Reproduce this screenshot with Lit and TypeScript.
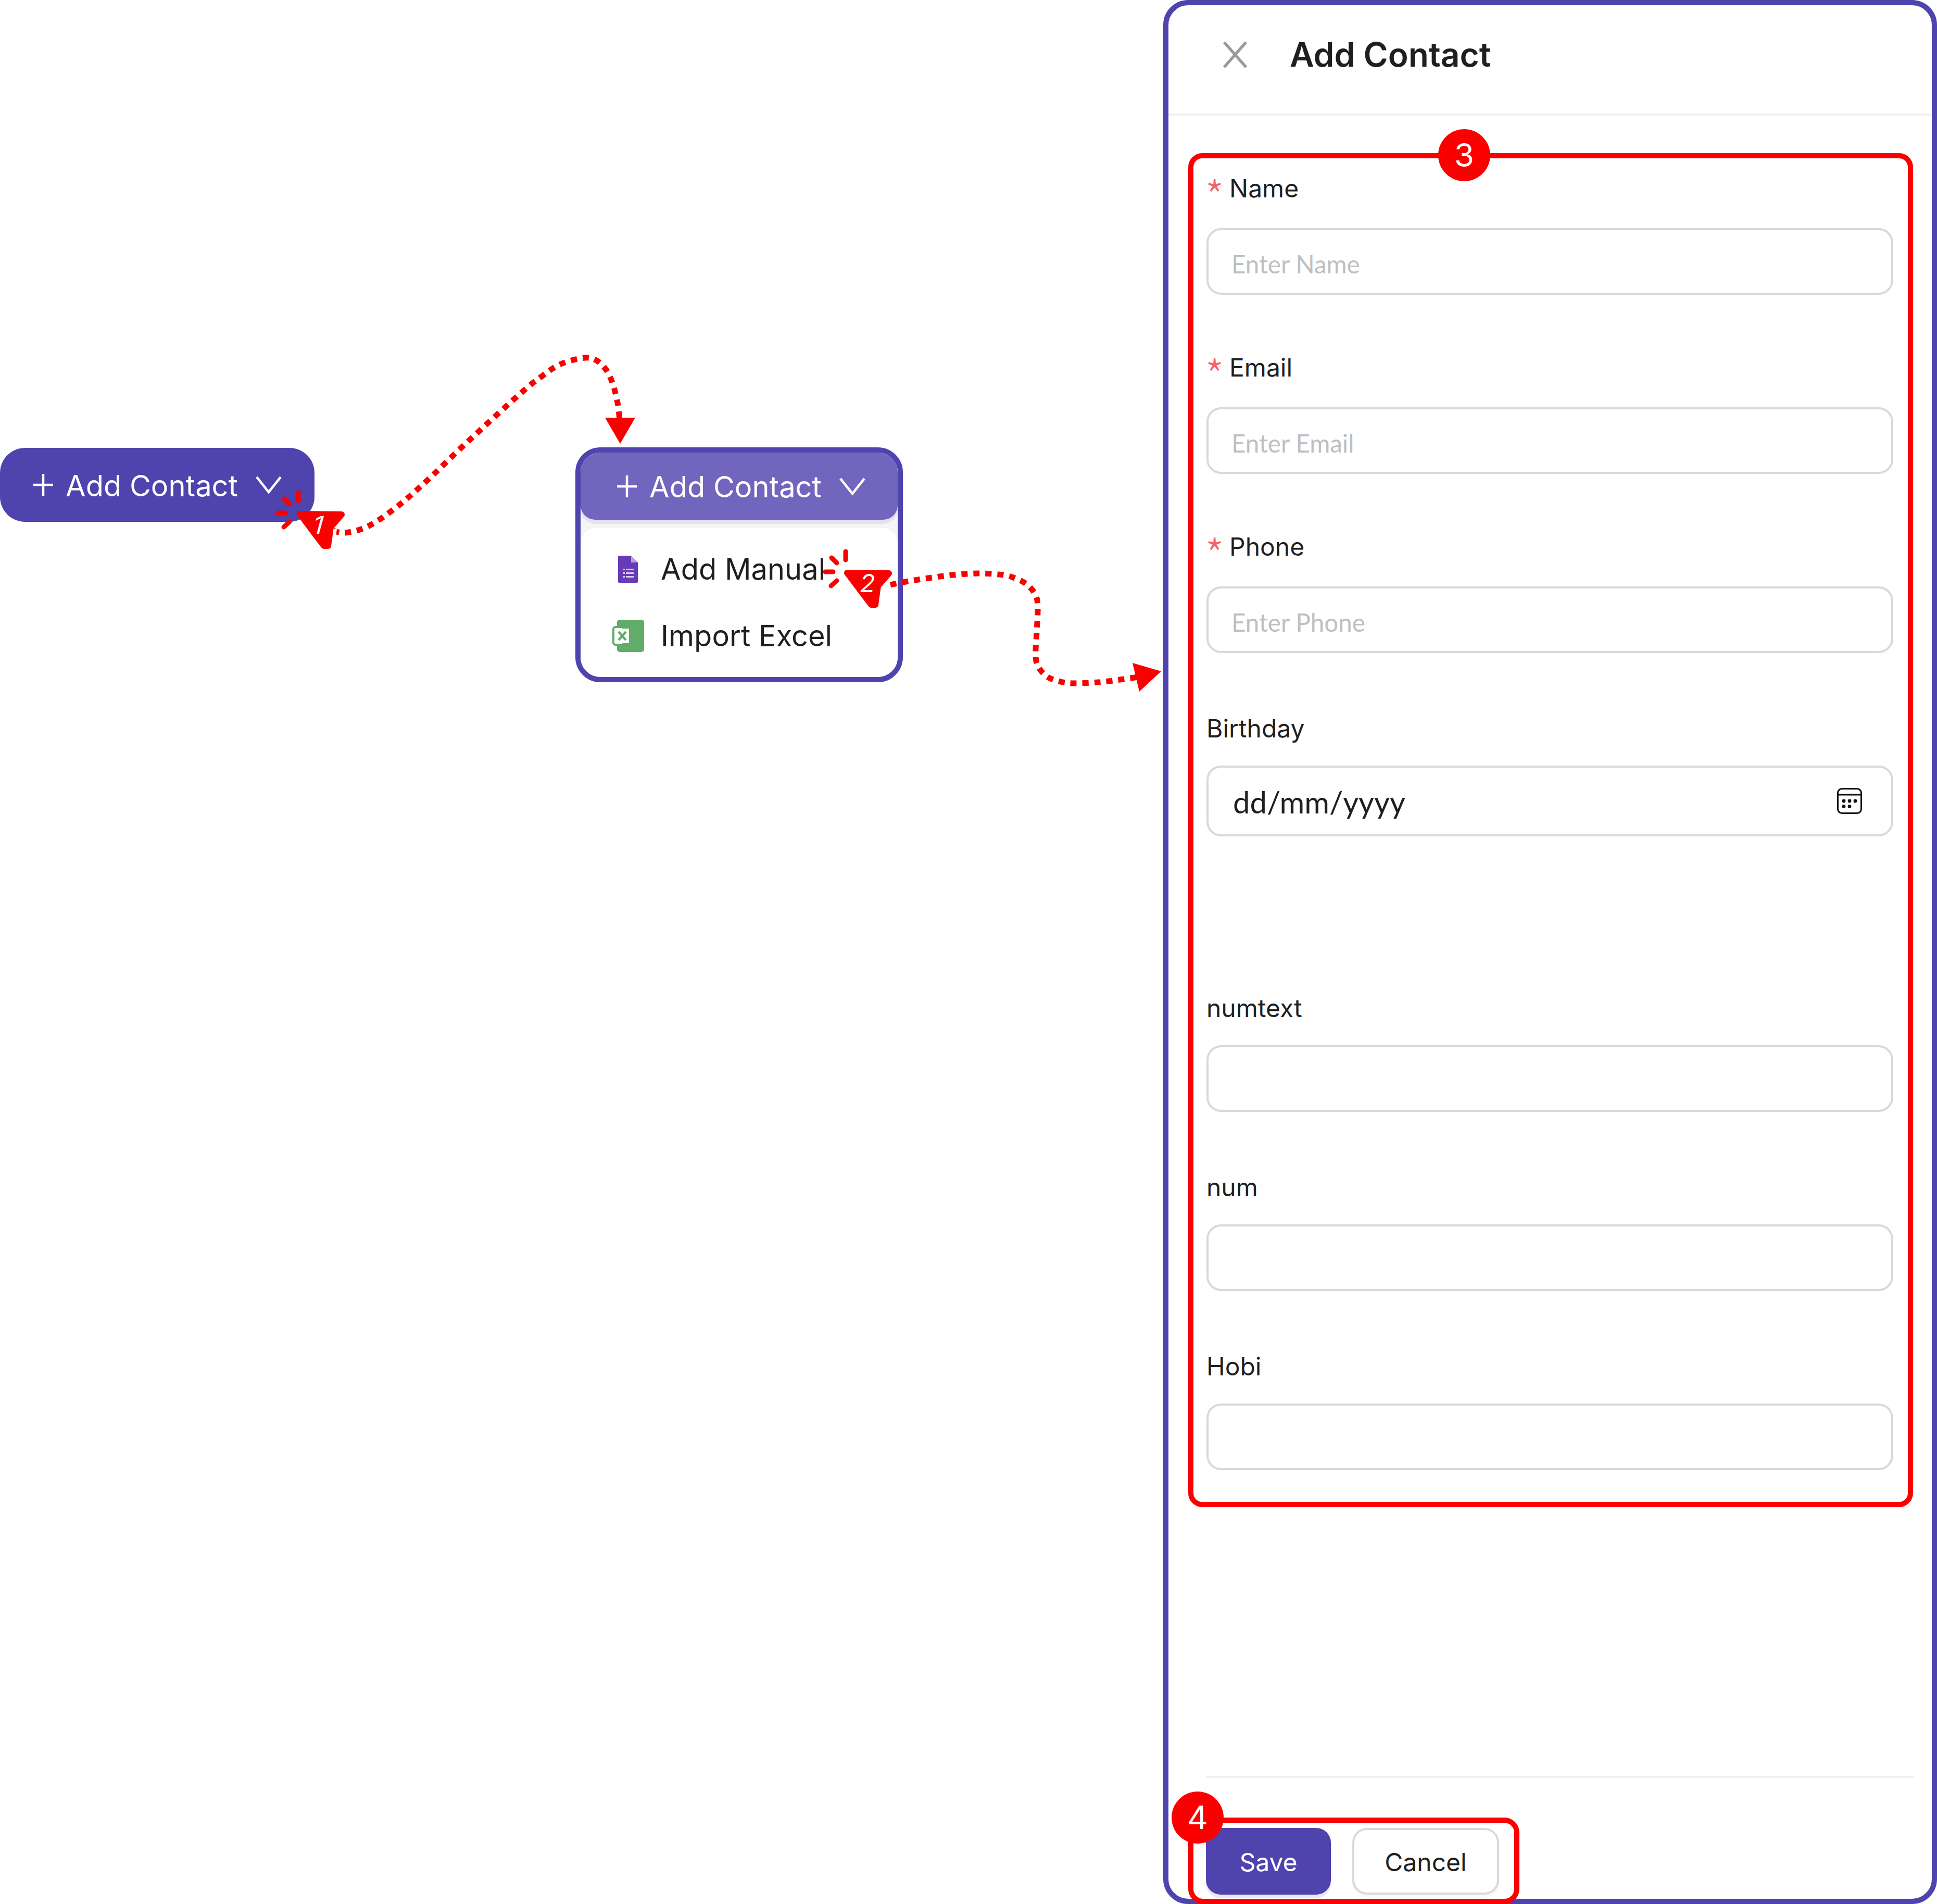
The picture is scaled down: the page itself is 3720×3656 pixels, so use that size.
import { LitElement, html, css, svg } from "lit";
import { customElement } from "lit/decorators.js";

const RED = "#fa0000";

/* Catmull-Rom through the given points, for the dotted connector routes. */
const smooth = (p: number[][]) => {
  let d = `M${p[0][0]} ${p[0][1]}`;
  for (let i = 0; i < p.length - 1; i++) {
    const a = p[Math.max(i - 1, 0)], b = p[i], c = p[i + 1], e = p[Math.min(i + 2, p.length - 1)];
    const c1 = [b[0] + (c[0] - a[0]) / 6, b[1] + (c[1] - a[1]) / 6];
    const c2 = [c[0] - (e[0] - b[0]) / 6, c[1] - (e[1] - b[1]) / 6];
    d += `C${c1[0].toFixed(1)} ${c1[1].toFixed(1)} ${c2[0].toFixed(1)} ${c2[1].toFixed(1)} ${c[0]} ${c[1]}`;
  }
  return d;
};

const route1 = smooth([[640, 1019], [663, 1023], [708, 1010], [765, 971], [823, 920], [893, 853], [1000, 755], [1040, 723], [1077, 699], [1123, 687], [1147, 693], [1164, 710], [1175, 732], [1182, 755], [1187, 779], [1190, 805]]);
const route2 = smooth([[1710, 1123], [1734, 1118], [1783, 1110], [1831, 1104], [1879, 1101], [1927, 1104], [1951, 1111], [1972, 1122], [1988, 1141], [1993, 1164], [1991, 1213], [1989, 1262], [1997, 1285], [2014, 1301], [2037, 1309], [2062, 1312], [2110, 1310], [2158, 1304], [2185, 1300]]);

const cursor = (dx: number, dy: number) => svg`
  <g transform="translate(${dx} ${dy})">
    <g stroke=${RED} stroke-width="9" stroke-linecap="round" fill="none">
      <path d="M573 946V962"/><path d="M546 958L556 968"/><path d="M534 985H549"/><path d="M545 1012L556 1002"/>
    </g>
    <path d="M641 1015L636 1050" fill="none" stroke="#fff" stroke-width="12"/>
    <path d="M576 987L656 988L635 1012L630 1048L622 1048Z" fill=${RED} stroke=${RED} stroke-width="12" stroke-linejoin="round"/>
  </g>
`;

@customElement("app-root")
export class AppRoot extends LitElement {
  static styles = css`
    :host { display: block; width: 3720px; height: 3656px; position: relative; background: #fff; font-family: Inter, "Liberation Sans", sans-serif; color: #1f1f1f; overflow: hidden; }
    .canvas { display: flex; align-items: flex-start; width: 3720px; height: 3656px; }
    .add { box-sizing: border-box; display: flex; align-items: center; color: #fff; font-size: 56px; background: #4f43ae; }
    .add svg { flex: none; display: block; }
    .label { margin-left: 23px; width: 365px; padding-top: 3px; }
    .solo { margin-top: 860px; width: 604px; height: 142px; border-radius: 48px; padding-left: 63px; }
    .card { box-sizing: border-box; margin: 859px 0 0 501px; width: 629px; height: 451px; border: 10px solid #4f43ae; border-radius: 48px; background: #f5f5f5; overflow: hidden; }
    .card .add { height: 129px; width: 100%; padding-left: 69px; background: #7265bd; border-radius: 0 0 28px 28px; box-shadow: 0 8px 0 #e5e2f0; }
    .menu { box-sizing: border-box; margin-top: 16px; height: 286px; background: #fff; border-radius: 28px 28px 0 0; padding-top: 34px; display: flex; flex-direction: column; gap: 38px; }
    .item { display: flex; align-items: center; height: 90px; font-size: 56px; padding-left: 71px; }
    .ic { flex: none; display: flex; width: 83px; }
    .ic.xls { margin-left: -10px; width: 93px; }
    .panel { box-sizing: border-box; margin-left: 500px; width: 1486px; height: 3656px; flex: none; border: 10px solid #4f43ae; border-radius: 48px; display: flex; flex-direction: column; }
    .head { box-sizing: border-box; height: 212px; flex: none; display: flex; align-items: center; border-bottom: 4px solid #f0f0f0; padding: 0 0 18px 105px; }
    .title { font-size: 64px; font-weight: 600; margin-left: 82px; margin-top: -2px; }
    .form { flex: 1; padding: 120px 74px 0 73px; }
    .field { margin-bottom: 120px; }
    .lab { height: 96px; font-size: 48px; line-height: 40px; display: flex; align-items: flex-start; }
    .lab.plain { line-height: 50px; }
    .star { color: #f5606a; font-family: "Noto Sans CJK SC", monospace; font-size: 84px; font-weight: 300; line-height: 64px; height: 40px; width: 44px; flex: none; margin-left: -3px; margin-right: 3px; }
    .input { box-sizing: border-box; height: 128px; border: 4px solid #d9d9d9; border-radius: 28px; padding: 8px 44px 0; display: flex; align-items: center; font-family: Lato, sans-serif; font-size: 47.5px; color: #bfbfbf; }
    .input.date { height: 136px; padding: 2px 56px 0 47px; justify-content: space-between; color: #1f1f1f; font-size: 58px; }
    .input.date svg { flex: none; margin-top: -2px; }
    .date-field { margin-bottom: 305px; }
    .foot { flex: none; margin: 0 35px 0 72px; border-top: 4px solid #f0f0f0; padding: 96px 0 8px; display: flex; gap: 41px; }
    .btn { box-sizing: border-box; height: 128px; border-radius: 28px; display: flex; align-items: center; justify-content: center; font-size: 48px; padding-top: 2px; }
    .save { width: 240px; background: #4f43ae; color: #fff; box-shadow: 0 7px 0 #ece9f7; }
    .cancel { width: 282px; background: #fff; border: 4px solid #d9d9d9; box-shadow: 0 7px 0 #fafafa; }
    .overlay { position: absolute; left: 0; top: 0; pointer-events: none; }
    .overlay text { font-family: Inter, "Liberation Sans", sans-serif; fill: #fff; }
  `;

  private plus() {
    return html`<svg width="40" height="42" viewBox="0 0 40 42" stroke="#fff" stroke-width="4.5" fill="none"><path d="M20 0V42M1 21H39"/></svg>`;
  }
  private chevron() {
    return html`<svg width="50" height="34" viewBox="0 0 50 34" stroke="#fff" stroke-width="4.5" fill="none"><path d="M2 2L25 31L48 2"/></svg>`;
  }
  private field(label: string, ph: string, req = false) {
    return html`<div class="field">
      <div class="lab ${req ? "" : "plain"}">${req ? html`<span class="star">*</span>` : ""}${label}</div>
      <div class="input">${ph}</div>
    </div>`;
  }

  render() {
    return html`
      <div class="canvas">
        <div class="add solo">${this.plus()}<span class="label">Add Contact</span>${this.chevron()}</div>
        <div class="card">
          <div class="add">${this.plus()}<span class="label">Add Contact</span>${this.chevron()}</div>
          <div class="menu">
            <div class="item"><span class="ic">
              <svg width="40" height="54" viewBox="0 0 40 54">
                <path d="M3 1H26L39 14V51a2 2 0 0 1-2 2H3a2 2 0 0 1-2-2V3a2 2 0 0 1 2-2Z" fill="#673ab7"/>
                <path d="M26 1L39 14H26Z" fill="#b7a3d9"/>
                <g fill="#d9cdee"><rect x="10" y="26" width="4" height="3"/><rect x="10" y="33" width="4" height="3"/><rect x="10" y="40" width="4" height="3"/><rect x="16" y="26" width="15" height="3"/><rect x="16" y="33" width="15" height="3"/><rect x="16" y="40" width="15" height="3"/></g>
              </svg></span>Add Manual</div>
            <div class="item"><span class="ic xls">
              <svg width="62" height="64" viewBox="0 0 62 64">
                <rect x="9" y="1" width="52" height="62" rx="5" fill="#62ac6a"/>
                <rect x="2" y="15" width="20" height="34" rx="4" fill="#fff" stroke="#62ac6a" stroke-width="4"/>
                <rect x="5" y="18" width="27" height="28" fill="#fff"/>
                <path d="M12 24L26 40M26 24L12 40" stroke="#62ac6a" stroke-width="4.5"/>
              </svg></span>Import Excel</div>
          </div>
        </div>
        <div class="panel">
          <div class="head">
            <svg width="46" height="50" viewBox="0 0 46 50" stroke="#9a9a9a" stroke-width="5.5" fill="none"><path d="M2 1L44 49M44 1L2 49"/></svg>
            <span class="title">Add Contact</span>
          </div>
          <div class="form">
            ${this.field("Name", "Enter Name", true)}
            ${this.field("Email", "Enter Email", true)}
            ${this.field("Phone", "Enter Phone", true)}
            <div class="field date-field">
              <div class="lab plain">Birthday</div>
              <div class="input date">dd/mm/yyyy
                <svg width="48" height="50" viewBox="0 0 48 50" fill="none" stroke="#111" stroke-width="3">
                  <rect x="1.5" y="1.5" width="45" height="47" rx="8"/><path d="M1.5 13H46.5"/>
                  <g fill="#111" stroke="none"><circle cx="13" cy="25" r="3.4"/><circle cx="24" cy="25" r="3.4"/><circle cx="35" cy="25" r="3.4"/><circle cx="13" cy="35.5" r="3.4"/><circle cx="24" cy="35.5" r="3.4"/></g>
                </svg>
              </div>
            </div>
            ${this.field("numtext", "")}
            ${this.field("num", "")}
            ${this.field("Hobi", "")}
          </div>
          <div class="foot">
            <div class="btn save">Save</div>
            <div class="btn cancel">Cancel</div>
          </div>
        </div>
      </div>
      <svg class="overlay" width="3720" height="3656" viewBox="0 0 3720 3656">
        <g fill="none" stroke=${RED} stroke-width="11" stroke-dasharray="12 11">
          <path d=${route1}/>
          <path d=${route2}/>
        </g>
        <path d="M1162 802H1220L1191 852Z" fill=${RED}/>
        <path d="M2175 1273L2230 1289L2188 1328Z" fill=${RED}/>
        ${cursor(0, 0)}
        ${cursor(1051, 113)}
        <text x="611" y="1025" font-size="48" font-style="italic" text-anchor="middle" transform="rotate(6 611 1007)">1</text>
        <text x="1666" y="1137" font-size="48" font-style="italic" text-anchor="middle">2</text>
        <g fill="none" stroke=${RED} stroke-width="10">
          <rect x="2287" y="299" width="1382" height="2590" rx="22"/>
          <rect x="2287" y="3495" width="626" height="156" rx="24"/>
        </g>
        <g fill=${RED}><circle cx="2812" cy="298" r="50"/><circle cx="2300" cy="3490" r="50"/></g>
        <text x="2812" y="320" font-size="62" text-anchor="middle">3</text>
        <text x="2300" y="3512" font-size="62" text-anchor="middle">4</text>
      </svg>
    `;
  }
}
